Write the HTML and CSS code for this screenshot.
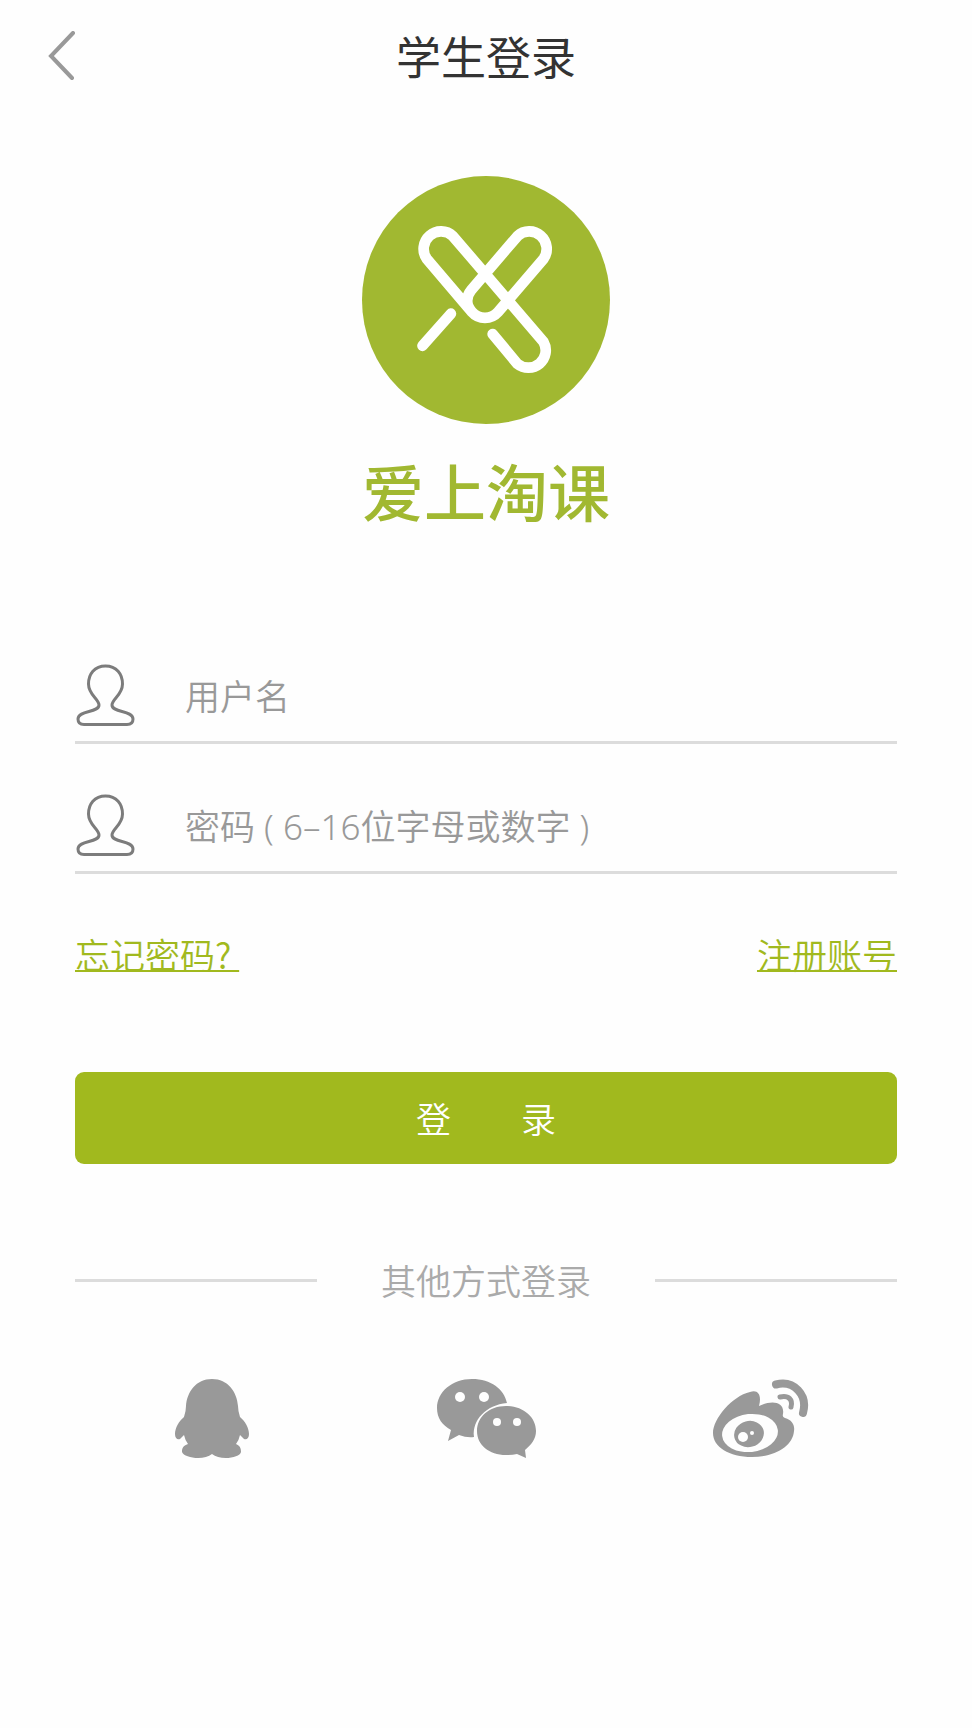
FILE: index.html
```html
<!DOCTYPE html>
<html lang="zh-CN">
<head>
<meta charset="utf-8">
<meta name="viewport" content="width=device-width, initial-scale=1">
<title>学生登录</title>
<link rel="stylesheet" href="styles.css">
</head>
<body>
<header class="topbar">
  <button class="back" type="button" aria-label="返回">
    <svg class="back-icon" viewBox="0 0 28 50" aria-hidden="true"><path d="M25 2 3 25 24 47"/></svg>
  </button>
  <h1 class="title">学生登录</h1>
</header>
<main class="content">
  <div class="brand">
    <svg class="brand-mark" viewBox="36 34 742 742" aria-hidden="true">
      <circle cx="407" cy="405" r="371"/>
      <path d="M217 542 302 446M427 507 501 596A52 52 0 0 0 579 530L308 214A52 52 0 0 0 230 282L365 441A52 52 0 0 0 443 441L579 282A52 52 0 0 0 501 214L363 375Q349 392 351 412Q352 425 365 441"/>
    </svg>
    <p class="brand-name">爱上淘课</p>
  </div>
  <form class="form">
    <label class="field">
      <svg class="field-icon" viewBox="0 0 60 62" aria-hidden="true"><path d="M30.500 2C19.500 2 13.500 10 13.500 20C13.500 31 24 35 24 41C24 49 3 46 3 55C3 59 5.500 60.500 9 60.500H52C55.500 60.500 58 59 58 55C58 46 37 49 37 41C37 35 47.500 31 47.500 20C47.500 10 41.500 2 30.500 2Z"/></svg>
      <input class="field-input" type="text" placeholder="用户名" aria-label="用户名">
    </label>
    <label class="field">
      <svg class="field-icon" viewBox="0 0 60 62" aria-hidden="true"><path d="M30.500 2C19.500 2 13.500 10 13.500 20C13.500 31 24 35 24 41C24 49 3 46 3 55C3 59 5.500 60.500 9 60.500H52C55.500 60.500 58 59 58 55C58 46 37 49 37 41C37 35 47.500 31 47.500 20C47.500 10 41.500 2 30.500 2Z"/></svg>
      <input class="field-input" type="password" placeholder="密码 ( 6–16位字母或数字 )" aria-label="密码">
    </label>
    <div class="links">
      <a class="link" href="#forgot">忘记密码?&nbsp;</a>
      <a class="link" href="#register">注册账号</a>
    </div>
    <button class="submit" type="submit">登　　录</button>
  </form>
  <div class="divider"><span class="divider-text">其他方式登录</span></div>
  <nav class="social" aria-label="其他方式登录">
    <a class="social-link" href="#qq" aria-label="QQ">
      <svg class="social-icon" viewBox="0 0 110 80" aria-hidden="true"><path d="M55 0C39 0 30 13 29 27Q29 32 27 38C22 42 18 49 18 55C18 59 20 61 23 60L27 56Q28 61 31 65C26 67 25 69 25 73C27 79 47 82 55 75C63 82 83 79 84 73C84 69 83 67 79 65Q82 61 83 56L87 60C90 61 92 59 92 55C92 49 88 42 83 38Q81 32 81 27C80 13 71 0 55 0Z"/></svg>
    </a>
    <a class="social-link" href="#wechat" aria-label="微信">
      <svg class="social-icon" viewBox="0 0 110 80" aria-hidden="true">
        <path d="M41 0C21 0 6 13 6 29C6 39 11 46 20 51L17 62L28 56Q36 59 43 58C41 41 55 26 76 24C73 10 60 0 41 0Z"/>
        <path d="M75 27C58 27 46 38 46 52C46 66 58 76 75 76Q81 76 86 75L95 79L94 71C100 66 105 60 105 52C105 38 92 27 75 27Z"/>
        <g class="hole"><circle cx="29" cy="18" r="5"/><circle cx="53" cy="18" r="5"/><circle cx="66" cy="43" r="4"/><circle cx="86" cy="43" r="4"/></g>
      </svg>
    </a>
    <a class="social-link" href="#weibo" aria-label="微博">
      <svg class="social-icon" viewBox="0 0 110 80" aria-hidden="true">
        <path d="M45 13C53 10 57 16 54 27C66 21 80 22 78 35Q77 38 80 39C87 41 90 46 89 52C88 67 70 78 47 78C24 78 8 68 8 54C8 40 27 17 45 13Z"/>
        <ellipse class="hole" cx="45" cy="54" rx="28" ry="19" transform="rotate(-6 45 54)"/>
        <ellipse cx="44" cy="55" rx="15" ry="13" transform="rotate(-15 44 55)"/>
        <g class="hole"><circle cx="38" cy="58" r="5"/><circle cx="47" cy="54" r="2"/></g>
        <path class="wave" d="M71 5.500C89 1 103 16 98 34"/>
        <path class="wave wave-small" d="M75 18C84 16 88 21 86 28"/>
      </svg>
    </a>
  </nav>
</main>
</body>
</html>
```
FILE: styles.css
```css
* {
  box-sizing: border-box;
}

body {
  margin: 0;
  background: #fefefe;
  color: #333;
  font-family: "Noto Sans CJK SC", sans-serif;
  font-size: 35px;
  font-weight: 350;
  line-height: 48px;
}

.topbar {
  display: grid;
  grid-template-columns: 1fr auto 1fr;
  align-items: center;
  height: 112px;
  padding: 0 48px;
}

.back {
  justify-self: start;
  display: flex;
  padding: 0;
  border: 0;
  background: none;
}

.back-icon {
  width: 28px;
  height: 50px;
  fill: none;
  stroke: #999;
  stroke-width: 4;
  stroke-linecap: round;
}

.title {
  margin: 0;
  font-size: 45px;
  font-weight: 400;
}

.content {
  padding: 64px 75px 0;
}

.brand {
  display: flex;
  flex-direction: column;
  align-items: center;
  gap: 30px;
}

.brand-mark {
  width: 248px;
  height: 248px;
  fill: #a1b831;
}

.brand-mark path {
  fill: none;
  stroke: #fff;
  stroke-width: 32;
  stroke-linecap: round;
}

.brand-name {
  margin: 0;
  color: #a1b831;
  font-size: 62px;
  font-weight: 500;
  line-height: 72px;
}

.form {
  padding-top: 118px;
}

.field {
  display: flex;
  align-items: center;
  gap: 50px;
  height: 100px;
  padding-top: 4px;
  border-bottom: 3px solid #dcdcdc;
}

.field + .field {
  margin-top: 30px;
}

.field-icon {
  flex: none;
  width: 60px;
  height: 62px;
  fill: none;
  stroke: #7c7c7c;
  stroke-width: 3;
}

.field-input {
  flex: 1;
  min-width: 0;
  padding: 4px 0 0;
  border: 0;
  outline: 0;
  background: none;
  color: #333;
  font: inherit;
  font-family: "Noto Sans", "Noto Sans CJK SC", sans-serif;
}

.field-input::placeholder {
  color: #999;
  opacity: 1;
}

.links {
  display: flex;
  justify-content: space-between;
  padding: 56px 0 94px;
}

.link {
  color: #a1b91e;
  text-decoration-thickness: 2px;
}

.submit {
  width: 100%;
  height: 92px;
  border: 0;
  border-radius: 9px;
  background: #a1b91e;
  color: #fff;
  font: inherit;
}

.divider {
  display: flex;
  align-items: center;
  gap: 64px;
  padding-top: 92px;
}

.divider::before,
.divider::after {
  content: "";
  flex: 1;
  height: 3px;
  background: #dcdcdc;
}

.divider-text {
  color: #aaa;
}

.social {
  display: grid;
  grid-template-columns: repeat(3, 1fr);
  justify-items: center;
  padding: 75px 0;
}

.social-link {
  display: flex;
}

.social-icon {
  width: 110px;
  height: 80px;
  fill: #999;
}

.social-icon .hole {
  fill: #fefefe;
}

.social-icon .wave {
  fill: none;
  stroke: #999;
  stroke-width: 8;
  stroke-linecap: round;
}

.social-icon .wave-small {
  stroke-width: 5;
}
```
